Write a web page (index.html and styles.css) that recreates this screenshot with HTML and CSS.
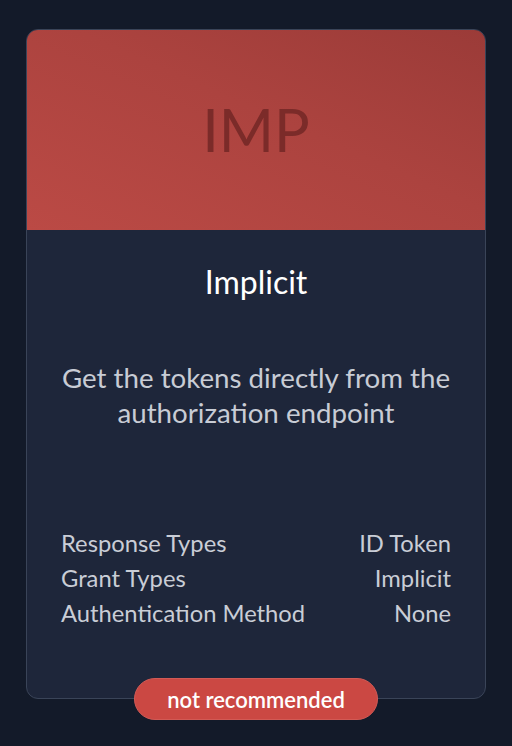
FILE: index.html
```html
<!DOCTYPE html>
<html lang="en">
<head>
<meta charset="utf-8">
<title>Implicit</title>
<link rel="stylesheet" href="styles.css">
</head>
<body>
<div class="card">
  <div class="card-header"><span class="abbr">IMP</span></div>
  <div class="card-body">
    <h2 class="title">Implicit</h2>
    <p class="desc">Get the tokens directly from the authorization endpoint</p>
    <dl class="props">
      <div class="row"><dt>Response Types</dt><dd>ID Token</dd></div>
      <div class="row"><dt>Grant Types</dt><dd>Implicit</dd></div>
      <div class="row"><dt>Authentication Method</dt><dd>None</dd></div>
    </dl>
  </div>
  <span class="badge">not recommended</span>
</div>
</body>
</html>
```
FILE: styles.css
```css
html, body {
  margin: 0;
  padding: 0;
}
body {
  background: #131a29;
  font-family: Lato, "Noto Sans", sans-serif;
  padding: 29px 26px 0 26px;
  height: 746px;
  box-sizing: border-box;
}
.card {
  position: relative;
  box-sizing: border-box;
  width: 460px;
  height: 670px;
  border: 1px solid #3a4458;
  border-radius: 12px;
  background: #1e263a;
  display: flex;
  flex-direction: column;
}
.card-header {
  height: 200px;
  flex: none;
  border-radius: 11px 11px 0 0;
  background: linear-gradient(to top right, #bb4a45 0%, #ac433f 55%, #9b3b38 100%);
  display: flex;
  align-items: center;
  justify-content: center;
}
.abbr {
  font-size: 59.5px;
  line-height: 1;
  color: #7b2b29;
}
.card-body {
  padding: 33px 34px 0 34px;
  display: flex;
  flex-direction: column;
}
.title {
  margin: 0;
  font-size: 32px;
  font-weight: 400;
  line-height: 38px;
  color: #ffffff;
  text-align: center;
}
.desc {
  margin: 59px -14px 0 -14px;
  font-size: 27.7px;
  line-height: 35px;
  color: #c8ccd5;
  text-align: center;
}
.props {
  margin: 96px 0 0 0;
  display: flex;
  flex-direction: column;
}
.row {
  display: flex;
  justify-content: space-between;
  font-size: 23.75px;
  line-height: 35px;
  color: #c9cdd6;
}
.row dt, .row dd {
  margin: 0;
}
.badge {
  position: absolute;
  left: 50%;
  bottom: -22px;
  transform: translateX(-50%);
  box-sizing: border-box;
  width: 244px;
  height: 42px;
  border-radius: 21px;
  background: #cb4843;
  border: 1px solid #d25a55;
  color: #ffffff;
  font-size: 22px;
  font-weight: 600;
  display: flex;
  align-items: center;
  justify-content: center;
}
```
